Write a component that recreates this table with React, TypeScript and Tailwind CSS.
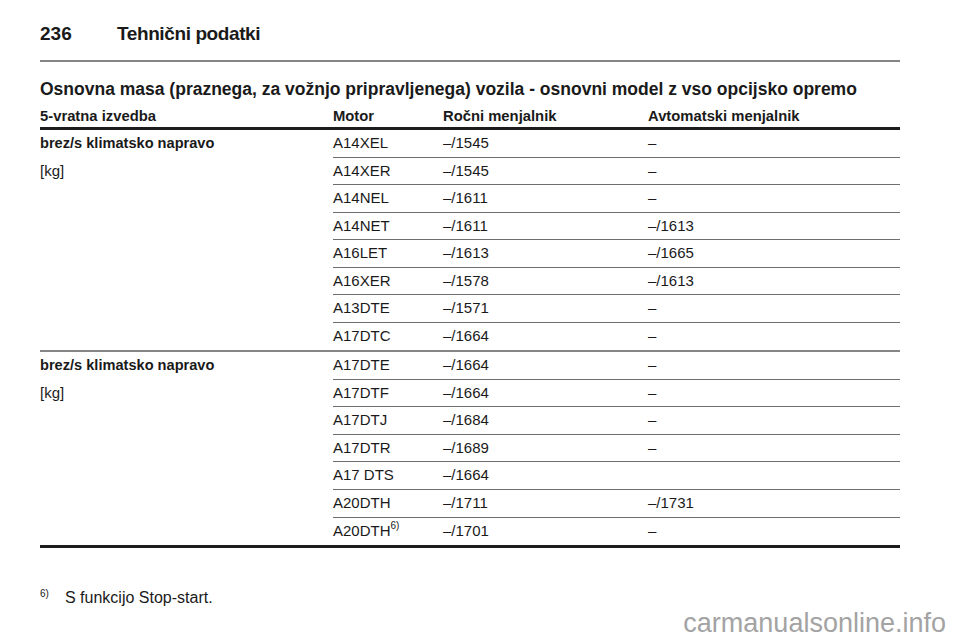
const groupOne = [
  { motor: "A14XEL", manual: "–/1545", auto: "–" },
  { motor: "A14XER", manual: "–/1545", auto: "–" },
  { motor: "A14NEL", manual: "–/1611", auto: "–" },
  { motor: "A14NET", manual: "–/1611", auto: "–/1613" },
  { motor: "A16LET", manual: "–/1613", auto: "–/1665" },
  { motor: "A16XER", manual: "–/1578", auto: "–/1613" },
  { motor: "A13DTE", manual: "–/1571", auto: "–" },
  { motor: "A17DTC", manual: "–/1664", auto: "–" },
];

const groupTwo = [
  { motor: "A17DTE", manual: "–/1664", auto: "–" },
  { motor: "A17DTF", manual: "–/1664", auto: "–" },
  { motor: "A17DTJ", manual: "–/1684", auto: "–" },
  { motor: "A17DTR", manual: "–/1689", auto: "–" },
  { motor: "A17 DTS", manual: "–/1664", auto: "" },
  { motor: "A20DTH", manual: "–/1711", auto: "–/1731" },
  { motor: "A20DTH", note: "6)", manual: "–/1701", auto: "–" },
];

type Row = { motor: string; manual: string; auto: string; note?: string };

const Group = ({ rows, rowH }: { rows: Row[]; rowH: string }) => (
  <div className="flex">
    <div className="w-[293px] shrink-0">
      <div className={`flex items-center font-bold text-[14.6px] ${rowH}`}>
        brez/s klimatsko napravo
      </div>
      <div className={`flex items-center ${rowH}`}>[kg]</div>
    </div>
    <div className="flex-1">
      {rows.map((r, i) => (
        <div
          key={i}
          className={`flex items-center ${rowH} ${
            i < rows.length - 1 ? "border-b border-[#6e6e6e]" : ""
          }`}
        >
          <div className="w-[110px] shrink-0 flex items-start">
            <span>{r.motor}</span>
            {r.note && (
              <span className="text-[10px] leading-none mt-[1px]">
                {r.note}
              </span>
            )}
          </div>
          <div className="w-[205px] shrink-0">{r.manual}</div>
          <div className="flex-1">{r.auto}</div>
        </div>
      ))}
    </div>
  </div>
);

export default function App() {
  return (
    <div className="relative w-[960px] h-[642px] bg-white text-[#1a1a1a] overflow-hidden font-['Liberation_Sans',Arial,sans-serif]">
      <div className="pl-[40px] w-[900px]">
        <div className="flex items-end h-[43px] text-[19px] font-bold leading-none tracking-[-0.4px]">
          <span className="w-[77px] tracking-normal">236</span>
          <span>Tehnični podatki</span>
        </div>
        <div className="mt-[17px] h-[2px] bg-[#858585]" />

        <h2 className="mt-[16px] text-[17.5px] font-bold leading-[22px]">
          Osnovna masa (praznega, za vožnjo pripravljenega) vozila - osnovni
          model z vso opcijsko opremo
        </h2>

        <div className="mt-[5px] text-[15px]">
          <div className="flex items-center h-[22px] font-bold text-[14.8px] border-b-[3px] border-[#1c1c1c] box-content">
            <div className="w-[293px] shrink-0">5-vratna izvedba</div>
            <div className="w-[110px] shrink-0">Motor</div>
            <div className="w-[205px] shrink-0">Ročni menjalnik</div>
            <div className="flex-1">Avtomatski menjalnik</div>
          </div>
          <Group rows={groupOne} rowH="h-[27.5px]" />
          <div className="h-[2px] bg-[#858585]" />
          <Group rows={groupTwo} rowH="h-[27.6px]" />
          <div className="h-[3px] bg-[#1c1c1c]" />
        </div>

        <div className="mt-[40px] flex items-start text-[16px]">
          <span className="w-[25px] text-[10px] leading-none pt-[1px]">6)</span>
          <span className="leading-[20px]">S funkcijo Stop-start.</span>
        </div>
      </div>

      <div className="absolute right-[14px] bottom-[5px] text-[27px] text-[#a3a3a3] leading-none">
        carmanualsonline.info
      </div>
    </div>
  );
}
